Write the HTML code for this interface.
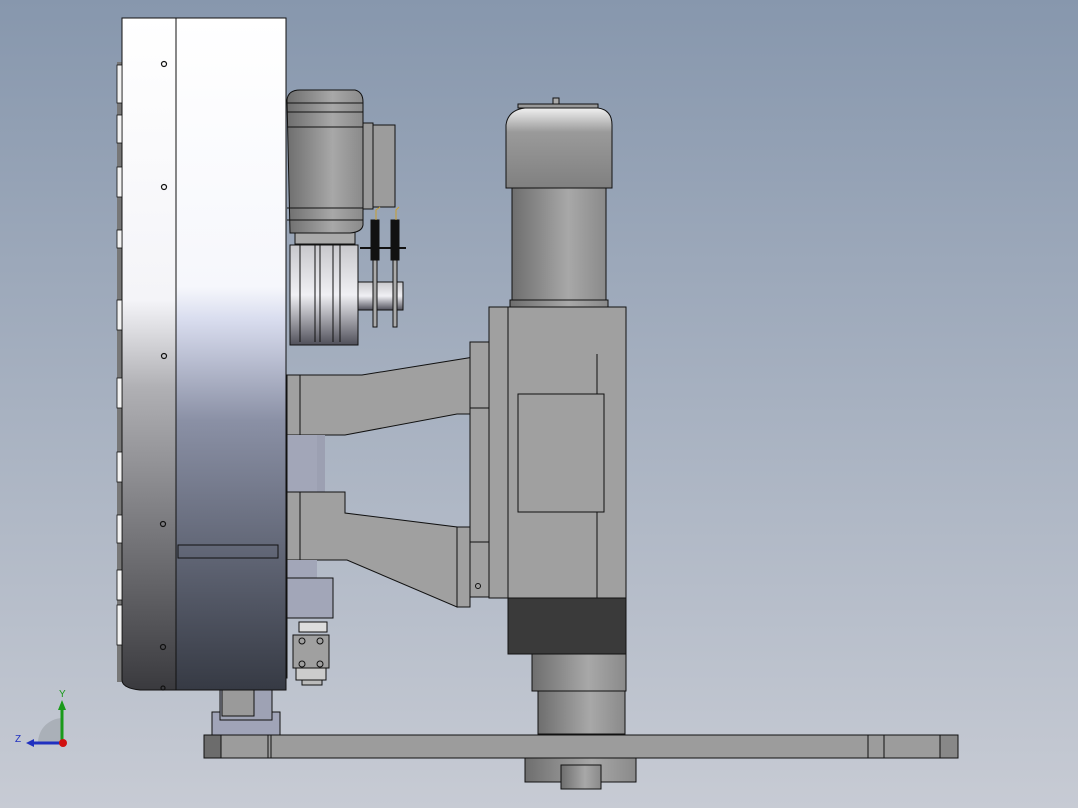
<!DOCTYPE html>
<html><head><style>
html,body{margin:0;padding:0;width:1078px;height:808px;overflow:hidden}
</style></head><body>
<svg width="1078" height="808" viewBox="0 0 1078 808" xmlns="http://www.w3.org/2000/svg" font-family="Liberation Sans, sans-serif">
<defs>
<linearGradient id="bg" x1="0" y1="0" x2="0" y2="1"><stop offset="0" stop-color="#8797ad"/><stop offset="1" stop-color="#c7cbd4"/></linearGradient>
<linearGradient id="outer" x1="0" y1="0" x2="0" y2="1"><stop offset="0" stop-color="#ffffff"/><stop offset="0.42" stop-color="#f4f4f8"/><stop offset="0.55" stop-color="#b0b0b4"/><stop offset="1" stop-color="#3a3a3e"/></linearGradient>
<linearGradient id="inner" x1="0" y1="0" x2="0" y2="1"><stop offset="0" stop-color="#ffffff"/><stop offset="0.4" stop-color="#f6f7fc"/><stop offset="0.45" stop-color="#d8dcee"/><stop offset="0.6" stop-color="#8a90a5"/><stop offset="1" stop-color="#363a44"/></linearGradient>
<linearGradient id="cyl" x1="0" y1="0" x2="1" y2="0"><stop offset="0" stop-color="#6e6e6e"/><stop offset="0.6" stop-color="#a8a8a8"/><stop offset="1" stop-color="#8a8a8a"/></linearGradient>
<linearGradient id="cap" x1="0" y1="0" x2="0" y2="1"><stop offset="0" stop-color="#f0f0f0"/><stop offset="0.3" stop-color="#9a9a9a"/><stop offset="1" stop-color="#808080"/></linearGradient>
<linearGradient id="pul" x1="0" y1="0" x2="0" y2="1"><stop offset="0" stop-color="#c8c8cc"/><stop offset="0.5" stop-color="#f0f0f4"/><stop offset="1" stop-color="#50505a"/></linearGradient>
</defs>
<rect width="1078" height="808" fill="url(#bg)"/>
<g stroke="#111" stroke-width="1">
<!-- base bar -->
<rect x="525" y="758" width="111" height="24" fill="url(#cyl)"/>
<rect x="561" y="765" width="40" height="24" fill="url(#cyl)"/>
<rect x="204" y="735" width="754" height="23" fill="#9c9c9c"/>
<rect x="204" y="735" width="17" height="23" fill="#6c6c6c"/>
<line x1="268" y1="735" x2="268" y2="758"/><line x1="271" y1="735" x2="271" y2="758"/>
<line x1="868" y1="735" x2="868" y2="758"/><line x1="884" y1="735" x2="884" y2="758"/>
<rect x="940" y="735" width="18" height="23" fill="#888"/>
<!-- base under plate -->
<rect x="212" y="712" width="68" height="23" fill="#a0a4b8"/>
<rect x="220" y="690" width="52" height="30" fill="#9ea2b4"/>
<rect x="222" y="690" width="32" height="26" fill="#9a9a9a"/>
<!-- arms -->
<polygon points="287,375 362,375 474,357 474,414 457,414 345,435 287,435" fill="#a0a0a0"/>
<rect x="474" y="357" width="15" height="57" fill="#a0a0a0"/>
<line x1="300" y1="375" x2="300" y2="435"/>
<rect x="287" y="435" width="30" height="57" fill="#a2a6b8" stroke="none"/>
<rect x="317" y="435" width="8" height="57" fill="#9ca0b2" stroke="none"/>
<polygon points="287,492 345,492 345,513 457,527 457,607 347,560 287,560" fill="#a0a0a0"/>
<line x1="300" y1="492" x2="300" y2="560"/>
<rect x="457" y="527" width="13" height="80" fill="#a0a0a0"/>
<rect x="287" y="560" width="30" height="18" fill="#a2a6b8" stroke="none"/>
<rect x="287" y="578" width="46" height="40" fill="#a2a6b8"/>
<rect x="470" y="342" width="19" height="255" fill="#a0a0a0"/>
<line x1="470" y1="408" x2="489" y2="408"/><line x1="470" y1="542" x2="489" y2="542"/>
<circle cx="478" cy="586" r="2.5" fill="none"/><circle cx="495" cy="365" r="2.5" fill="none"/>
<!-- clamp -->
<rect x="299" y="622" width="28" height="10" fill="#ddd"/>
<rect x="293" y="635" width="36" height="33" fill="#a0a0a0"/>
<rect x="296" y="668" width="30" height="12" fill="#ccc"/>
<rect x="302" y="680" width="20" height="5" fill="#bbb"/>
<circle cx="302" cy="641" r="3" fill="none"/><circle cx="320" cy="641" r="3" fill="none"/><circle cx="302" cy="664" r="3" fill="none"/><circle cx="320" cy="664" r="3" fill="none"/>
<!-- spindle -->
<rect x="489" y="307" width="137" height="291" fill="#a0a0a0"/>
<line x1="508" y1="307" x2="508" y2="598"/><line x1="597" y1="354" x2="597" y2="598"/>
<rect x="518" y="394" width="86" height="118" fill="#a0a0a0"/>
<rect x="508" y="598" width="118" height="56" fill="#3a3a3a"/>
<rect x="532" y="654" width="94" height="37" fill="url(#cyl)"/>
<rect x="538" y="691" width="87" height="43" fill="url(#cyl)"/>
<rect x="512" y="188" width="94" height="115" fill="url(#cyl)"/>
<rect x="510" y="300" width="98" height="7" fill="url(#cyl)"/>
<path d="M506,188 L506,125 Q508,110 525,108 L598,108 Q612,110 612,125 L612,188 Z" fill="url(#cap)"/>
<rect x="518" y="104" width="80" height="4" fill="#999"/>
<rect x="553" y="98" width="6" height="6" fill="#aaa"/>
<!-- motor -->
<rect x="290" y="245" width="68" height="100" fill="url(#pul)"/>
<line x1="300" y1="245" x2="300" y2="342"/><line x1="315" y1="245" x2="315" y2="342"/><line x1="320" y1="245" x2="320" y2="342"/><line x1="333" y1="245" x2="333" y2="342"/><line x1="340" y1="245" x2="340" y2="342"/>
<rect x="358" y="282" width="45" height="28" fill="url(#pul)"/>
<rect x="295" y="232" width="60" height="12" fill="#aaa"/>
<path d="M287,100 Q288,90 300,90 L355,90 Q363,92 363,102 L363,225 Q362,232 350,233 L290,233 Z" fill="url(#cyl)"/>
<line x1="287" y1="103" x2="363" y2="103"/><line x1="287" y1="112" x2="363" y2="112"/><line x1="287" y1="127" x2="363" y2="127"/><line x1="287" y1="208" x2="363" y2="208"/><line x1="287" y1="220" x2="363" y2="220"/>
<rect x="363" y="123" width="10" height="86" fill="#9a9a9a"/>
<rect x="373" y="125" width="22" height="82" fill="#9c9c9c"/>
<rect x="371" y="220" width="8" height="40" fill="#111"/><rect x="391" y="220" width="8" height="40" fill="#111"/>
<line x1="360" y1="248" x2="406" y2="248" stroke-width="2"/>
<rect x="373" y="260" width="4" height="67" fill="#aaa"/><rect x="393" y="260" width="4" height="67" fill="#aaa"/>
<path d="M376,220 L376,210 L380,207" fill="none" stroke="#c9a030"/><path d="M396,220 L396,210 L399,207" fill="none" stroke="#c9a030"/>
<!-- main plate -->
<rect x="117" y="62" width="5" height="620" fill="#777" stroke="none"/>
<path d="M122,18 L176,18 L176,690 L140,690 Q122,688 122,680 Z" fill="url(#outer)"/>
<rect x="176" y="18" width="110" height="672" fill="url(#inner)"/>
<rect x="178" y="545" width="100" height="13" fill="none"/>
<rect x="286" y="378" width="1" height="300" fill="#111"/>
</g>
<g fill="none" stroke="#111" stroke-width="1.2">
<circle cx="164" cy="64" r="2.5"/><circle cx="164" cy="187" r="2.5"/><circle cx="164" cy="356" r="2.5"/><circle cx="163" cy="524" r="2.5"/><circle cx="163" cy="647" r="2.5"/><circle cx="163" cy="688" r="2"/>
</g>
<g fill="#f2f2f2" stroke="#111" stroke-width="0.8">
<rect x="117" y="65" width="5" height="38"/><rect x="117" y="115" width="5" height="28"/><rect x="117" y="167" width="5" height="30"/><rect x="117" y="230" width="5" height="18"/><rect x="117" y="300" width="5" height="30"/><rect x="117" y="378" width="5" height="30"/><rect x="117" y="452" width="5" height="30"/><rect x="117" y="515" width="5" height="28"/><rect x="117" y="570" width="5" height="30"/><rect x="117" y="605" width="5" height="40"/>
</g>
<!-- triad -->
<path d="M38,742 A25,25 0 0 1 62,718 L62,742 Z" fill="#aab0b8"/>
<line x1="62" y1="743" x2="62" y2="708" stroke="#1a9a1a" stroke-width="3"/>
<polygon points="58,710 62,700 66,710" fill="#1a9a1a"/>
<line x1="62" y1="743" x2="32" y2="743" stroke="#2030c0" stroke-width="3"/>
<polygon points="34,739 26,743 34,747" fill="#2030c0"/>
<circle cx="63" cy="743" r="4" fill="#d01010"/>
<text x="59" y="697" font-size="10" fill="#1a9a1a">Y</text>
<text x="15" y="742" font-size="10" fill="#2030c0">Z</text>
</svg>
</body></html>
